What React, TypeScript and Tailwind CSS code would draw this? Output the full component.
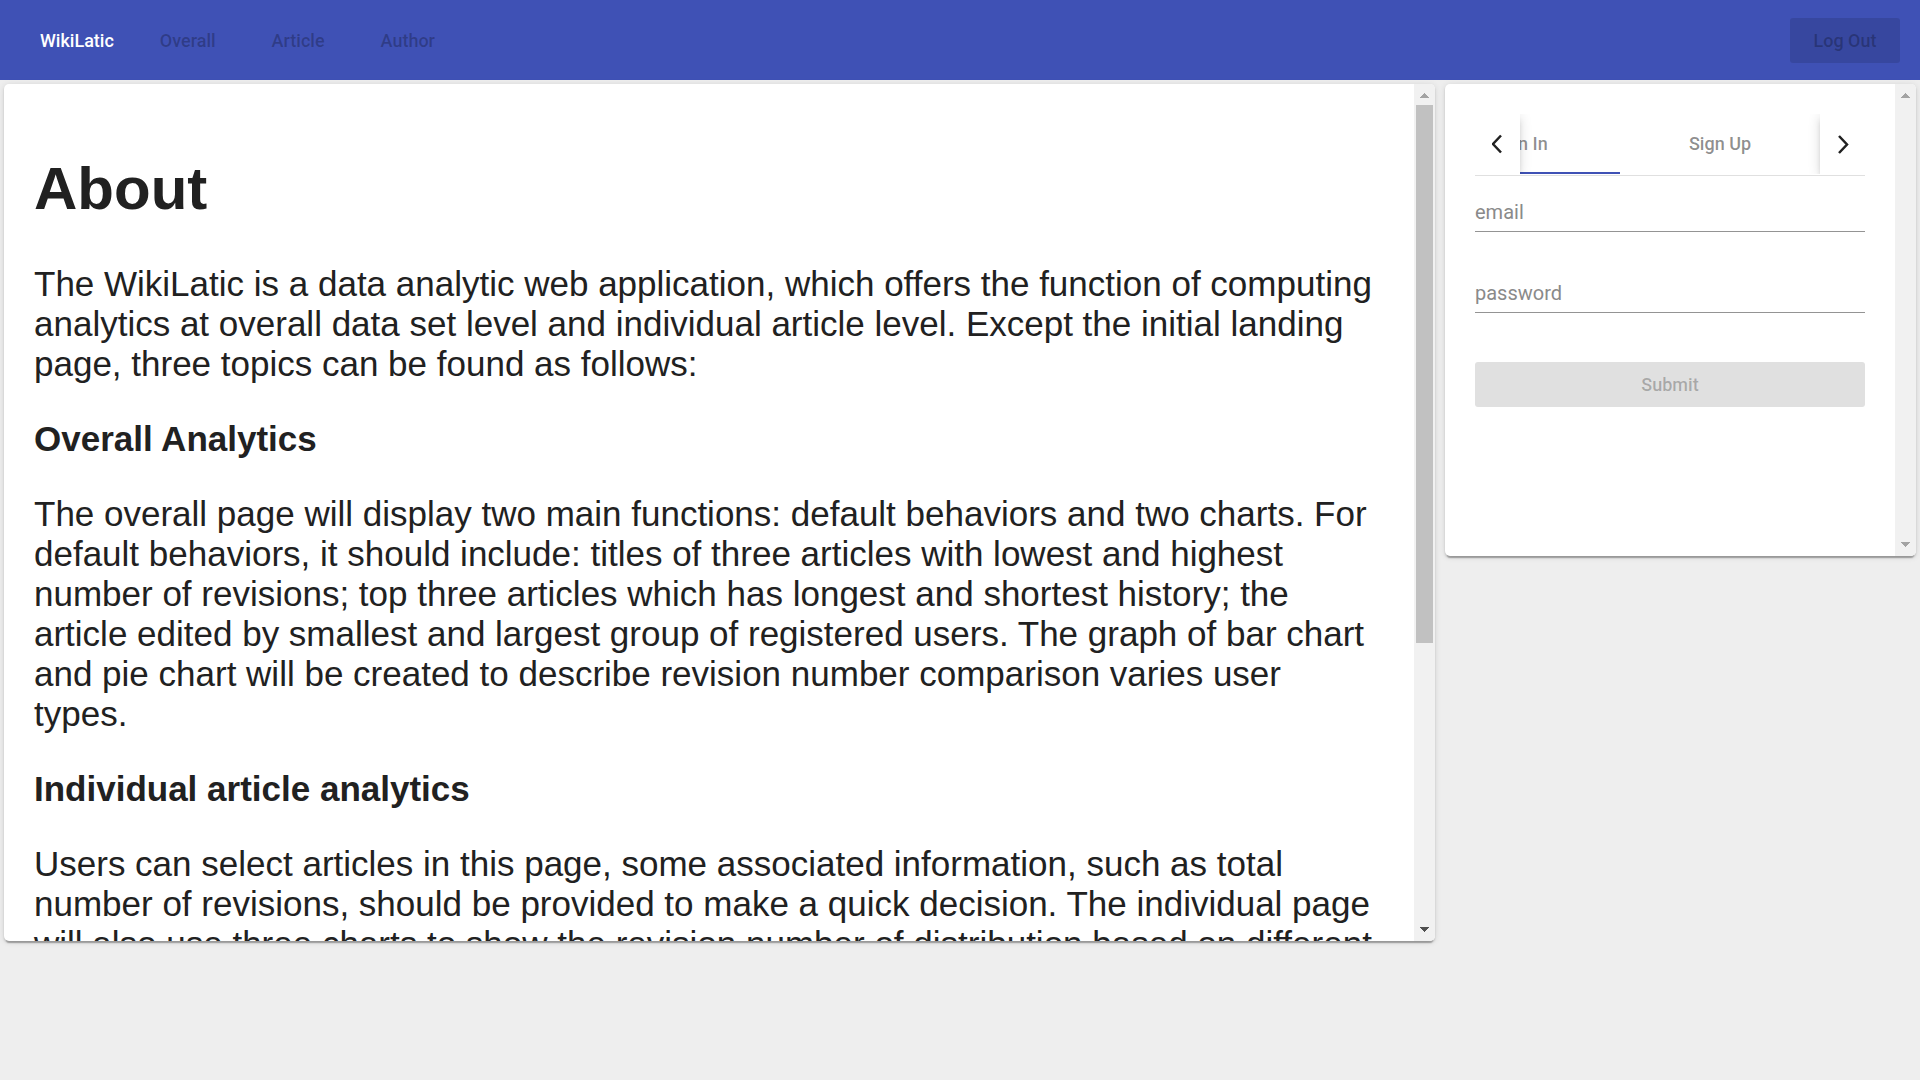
import React from "react";

const cardShadow =
  "shadow-[0_4px_1px_-2px_rgba(0,0,0,0.2),0_2px_2px_0_rgba(0,0,0,0.14),0_1px_6px_0_rgba(0,0,0,0.12)]";

function Arrow({ up, dark }: { up?: boolean; dark?: boolean }) {
  return (
    <svg width="9" height="5" viewBox="0 0 9 5" shapeRendering="crispEdges" className={dark ? "fill-[#505050]" : "fill-[#a3a3a3]"} aria-hidden="true">
      {up ? <path d="M4.5 0 9 5H0z" /> : <path d="M0 0h9L4.5 5z" />}
    </svg>
  );
}

function ScrollRail({ active }: { active?: boolean }) {
  return (
    <div className="flex w-[21px] shrink-0 flex-col items-center bg-[#f1f1f1]" aria-hidden="true">
      <div className="flex h-[21px] w-full shrink-0 items-center justify-center pt-0.5">
        <Arrow up />
      </div>
      <div className="w-full flex-1 px-0.5">
        {active && <div className="h-[66%] w-full bg-[#c1c1c1]" />}
      </div>
      <div className="flex h-[21px] w-full shrink-0 items-center justify-center pb-0.5">
        <Arrow dark={active} />
      </div>
    </div>
  );
}

function Toolbar() {
  return (
    <header className="flex h-20 items-center bg-[#3f51b5] px-5 text-lg leading-[45px] font-medium">
      <a href="#home" className="mr-1.5 px-5 text-white">WikiLatic</a>
      <nav className="flex gap-4 text-black/[0.26]">
        <button type="button" disabled className="px-5">Overall</button>
        <button type="button" disabled className="px-5">Article</button>
        <button type="button" disabled className="px-5">Author</button>
      </nav>
      <button type="button" disabled className="ml-auto h-[45px] w-[110px] rounded-[3px] bg-black/[0.12] text-black/[0.26]">
        Log Out
      </button>
    </header>
  );
}

function About() {
  return (
    <section className={`flex h-[857px] overflow-hidden rounded-[5px] bg-white ${cardShadow}`}>
      <div className="min-w-0 flex-1 overflow-hidden py-[30px] pr-10 pl-[30px] font-['Liberation_Sans',Arial,sans-serif] text-[35px] leading-10">
        <h1 className="my-10 text-[60px] leading-[70px] font-bold">About</h1>
        <p className="mb-[35px]">
          The WikiLatic is a data analytic web application, which offers the function of computing analytics at overall data set level and individual article level. Except the initial landing page, three topics can be found as follows:
        </p>
        <h3 className="mb-[35px] font-bold">Overall Analytics</h3>
        <p className="mb-[35px]">
          The overall page will display two main functions: default behaviors and two charts. For default behaviors, it should include: titles of three articles with lowest and highest number of revisions; top three articles which has longest and shortest history; the article edited by smallest and largest group of registered users. The graph of bar chart and pie chart will be created to describe revision number comparison varies user types.
        </p>
        <h3 className="mb-[35px] font-bold">Individual article analytics</h3>
        <p>
          Users can select articles in this page, some associated information, such as total number of revisions, should be provided to make a quick decision. The individual page will also use three charts to show the revision number of distribution based on different
        </p>
      </div>
      <ScrollRail active />
    </section>
  );
}

function Chevron({ d }: { d: string }) {
  return (
    <svg width="12" height="20" viewBox="0 0 12 20" fill="none" stroke="#212121" strokeWidth="2.5" aria-hidden="true">
      <path d={d} />
    </svg>
  );
}

function SignIn() {
  return (
    <section className={`flex h-[472px] overflow-hidden rounded-[5px] bg-white ${cardShadow}`}>
      <div className="min-w-0 flex-1 overflow-hidden p-[30px]">
        <div className="border-b border-[#e0e0e0] pb-px">
          <div className="flex h-[60px] overflow-hidden">
            <button type="button" aria-label="Previous tabs" className="z-10 flex w-[45px] shrink-0 items-center justify-center bg-white shadow-[0_5px_6px_-2px_rgba(0,0,0,0.2),0_2px_12px_0_rgba(0,0,0,0.14)]">
              <Chevron d="M9 1.5 1 10l8 8.5" />
            </button>
            <div role="tablist" className="flex min-w-0 flex-1 justify-end overflow-hidden text-lg font-medium text-black/[0.46]">
              <button type="button" role="tab" aria-selected="true" className="w-[200px] shrink-0 border-y-2 border-t-transparent border-b-[#3f51b5]">Sign In</button>
              <button type="button" role="tab" aria-selected="false" className="w-[200px] shrink-0 border-y-2 border-transparent">Sign Up</button>
            </div>
            <button type="button" aria-label="Next tabs" className="z-10 flex w-[45px] shrink-0 items-center justify-center bg-white shadow-[0_5px_6px_-2px_rgba(0,0,0,0.2),0_2px_12px_0_rgba(0,0,0,0.14)]">
              <Chevron d="m2 2 8 8.5L2 19" />
            </button>
          </div>
        </div>
        <form className="pt-4 text-xl">
          <input type="email" aria-label="email" placeholder="email" className="mb-[41px] block h-10 w-full border-b border-[#949494] placeholder:text-[#8a8a8a] outline-none" />
          <input type="password" aria-label="password" placeholder="password" className="mb-[49px] block h-10 w-full border-b border-[#949494] placeholder:text-[#8a8a8a] outline-none" />
          <button type="submit" disabled className="block h-[45px] w-full rounded-[3px] bg-[#e0e0e0] text-lg font-medium text-black/[0.26]">Submit</button>
        </form>
      </div>
      <ScrollRail />
    </section>
  );
}

export default function App() {
  return (
    <div className="min-h-screen bg-[#eeeeee] font-[Roboto,sans-serif] text-[#212121]">
      <Toolbar />
      <main className="grid grid-cols-[1431fr_471fr] items-start gap-2.5 p-1">
        <About />
        <SignIn />
      </main>
    </div>
  );
}
